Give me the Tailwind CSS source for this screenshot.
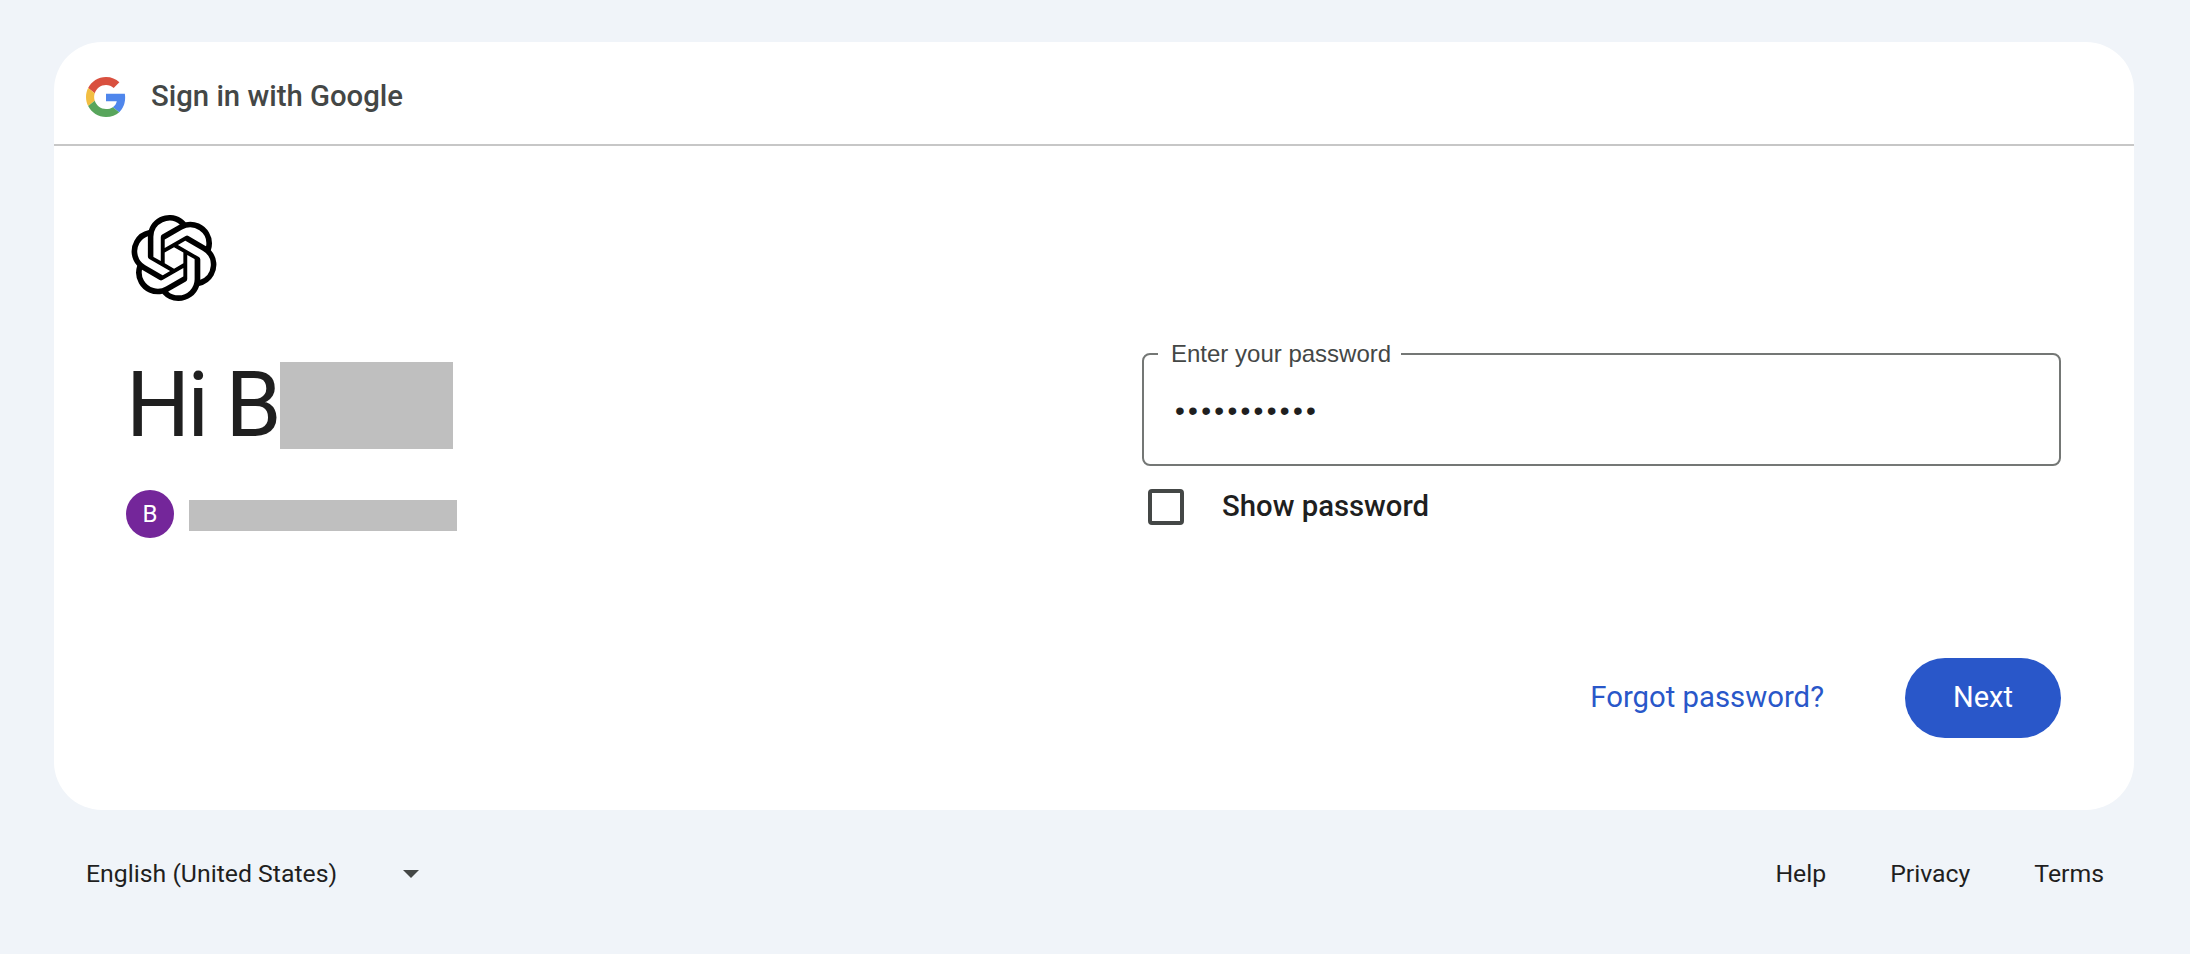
<!DOCTYPE html>
<html>
  <head>
    <title>Sign in with Google</title>
    <script src="https://cdn.jsdelivr.net/npm/@tailwindcss/browser@4"></script>
  </head>
  <body class="h-[954px] overflow-hidden bg-[#f0f4f9] font-['Roboto',sans-serif] text-[#1f1f1f]">
    <div class="pt-[42px] pr-[56px] pl-[54px]">
      <!-- card -->
      <main class="h-[768px] rounded-[48px] bg-white">
        <header class="flex h-[104px] items-center gap-[25px] border-b-2 border-[#c7c7c7] pt-[7px] pl-[32px]">
          <svg class="h-[40px] w-[40px]" viewBox="0 0 48 48">
            <path fill="#d9503f" d="M24 9.5c3.54 0 6.71 1.22 9.21 3.6l6.85-6.85C35.9 2.38 30.47 0 24 0 14.62 0 6.51 5.38 2.56 13.22l7.98 6.19C12.43 13.72 17.74 9.5 24 9.5z"/>
            <path fill="#4f86ec" d="M46.98 24.55c0-1.57-.15-3.09-.38-4.55H24v9.02h12.94c-.58 2.96-2.26 5.48-4.78 7.18l7.73 6c4.51-4.18 7.09-10.36 7.09-17.65z"/>
            <path fill="#f2be42" d="M10.53 28.59c-.5-1.45-.78-2.99-.78-4.59s.27-3.14.78-4.59l-7.98-6.19C.92 16.46 0 20.12 0 24c0 3.88.92 7.54 2.56 10.78l7.97-6.19z"/>
            <path fill="#58a55c" d="M24 48c6.48 0 11.93-2.13 15.89-5.81l-7.73-6c-2.15 1.45-4.92 2.3-8.16 2.3-6.26 0-11.57-4.22-13.47-9.91l-7.98 6.19C6.51 42.62 14.62 48 24 48z"/>
          </svg>
          <span class="text-[29.3px] font-medium text-[#444746]">Sign in with Google</span>
        </header>

        <div class="grid grid-cols-[1016px_919px] pl-[72px]">
          <section class="pt-[69px]">
            <svg class="ml-[5px] h-[86px] w-[86px]" viewBox="0 0 24 24" fill="#000">
              <path d="M22.2819 9.8211a5.9847 5.9847 0 0 0-.5157-4.9108 6.0462 6.0462 0 0 0-6.5098-2.9A6.0651 6.0651 0 0 0 4.9807 4.1818a5.9847 5.9847 0 0 0-3.9977 2.9 6.0462 6.0462 0 0 0 .7427 7.0966 5.98 5.98 0 0 0 .511 4.9107 6.051 6.051 0 0 0 6.5146 2.9001A5.9847 5.9847 0 0 0 13.2599 24a6.0557 6.0557 0 0 0 5.7718-4.2058 5.9894 5.9894 0 0 0 3.9977-2.9001 6.0557 6.0557 0 0 0-.7475-7.0729zm-9.022 12.6081a4.4755 4.4755 0 0 1-2.8764-1.0408l.1419-.0804 4.7783-2.7582a.7948.7948 0 0 0 .3927-.6813v-6.7369l2.02 1.1686a.071.071 0 0 1 .038.052v5.5826a4.504 4.504 0 0 1-4.4945 4.4944zm-9.6607-4.1254a4.4708 4.4708 0 0 1-.5346-3.0137l.142.0852 4.783 2.7582a.7712.7712 0 0 0 .7806 0l5.8428-3.3685v2.3324a.0804.0804 0 0 1-.0332.0615L9.74 19.9502a4.4992 4.4992 0 0 1-6.1408-1.6464zM2.3408 7.8956a4.485 4.485 0 0 1 2.3655-1.9728V11.6a.7664.7664 0 0 0 .3879.6765l5.8144 3.3543-2.0201 1.1685a.0757.0757 0 0 1-.071 0l-4.8303-2.7865A4.504 4.504 0 0 1 2.3408 7.872zm16.5963 3.8558L13.1038 8.364 15.1192 7.2a.0757.0757 0 0 1 .071 0l4.8303 2.7913a4.4944 4.4944 0 0 1-.6765 8.1042v-5.6772a.79.79 0 0 0-.407-.667zm2.0107-3.0231l-.142-.0852-4.7735-2.7818a.7759.7759 0 0 0-.7854 0L9.409 9.2297V6.8974a.0662.0662 0 0 1 .0284-.0615l4.8303-2.7866a4.4992 4.4992 0 0 1 6.6802 4.66zM8.3065 12.863l-2.02-1.1638a.0804.0804 0 0 1-.038-.0567V6.0742a4.4992 4.4992 0 0 1 7.3757-3.4537l-.142.0805L8.704 5.459a.7948.7948 0 0 0-.3927.6813zm1.0976-2.3654l2.602-1.4998 2.6069 1.4998v2.9994l-2.5974 1.4997-2.6067-1.4997Z"/>
            </svg>
            <h1 class="mt-[61px] flex h-[87px] items-center text-[90px] leading-none font-normal tracking-[-3px]">
              <span class="w-[154px] shrink-0">Hi B</span><span class="h-[87px] w-[173px] bg-[#bfbfbf]"></span>
            </h1>
            <div class="mt-[41px] flex items-center gap-[15px]">
              <div class="flex h-[48px] w-[48px] items-center justify-center rounded-full bg-[#74269a] text-[24px] text-white">B</div>
              <div class="mt-[3px] h-[31px] w-[268px] bg-[#bfbfbf]"></div>
            </div>
          </section>

          <section class="pt-[194px]">
            <fieldset class="h-[126px] rounded-[8px] border-2 border-[#747775] pl-[14px]">
              <legend class="pr-[10px] pl-[13px] font-['Liberation_Sans',sans-serif] text-[24px] leading-[28px] text-[#444746]">Enter your password</legend>
              <input type="password" value="abcdefghijk" class="mt-[22px] w-full pl-[17px] font-['Liberation_Sans',sans-serif] text-[28px] tracking-[3.3px] text-[#1f1f1f] outline-none">
            </fieldset>
            <label class="mt-[19px] flex items-center gap-[38px] pl-[6px]">
              <span class="h-[36px] w-[36px] rounded-[4px] border-4 border-[#444746]"></span>
              <span class="text-[29.3px] font-medium">Show password</span>
            </label>
            <div class="mt-[129px] flex items-center justify-end gap-[81px]">
              <a class="text-[29.3px] text-[#2957c9]">Forgot password?</a>
              <button class="h-[80px] w-[156px] rounded-[40px] bg-[#2957c9] text-[29px] text-white">Next</button>
            </div>
          </section>
        </div>
      </main>

      <footer class="mt-[47px] flex items-center justify-between pr-[30px] pl-[32px] text-[24.8px] leading-[34px]">
        <div class="flex items-center gap-[66px]">
          <span>English (United States)</span>
          <span class="h-0 w-0 border-x-[8px] border-t-[8px] border-x-transparent border-t-[#444746]"></span>
        </div>
        <nav class="flex gap-[64px]">
          <a>Help</a>
          <a>Privacy</a>
          <a>Terms</a>
        </nav>
      </footer>
    </div>
  </body>
</html>
